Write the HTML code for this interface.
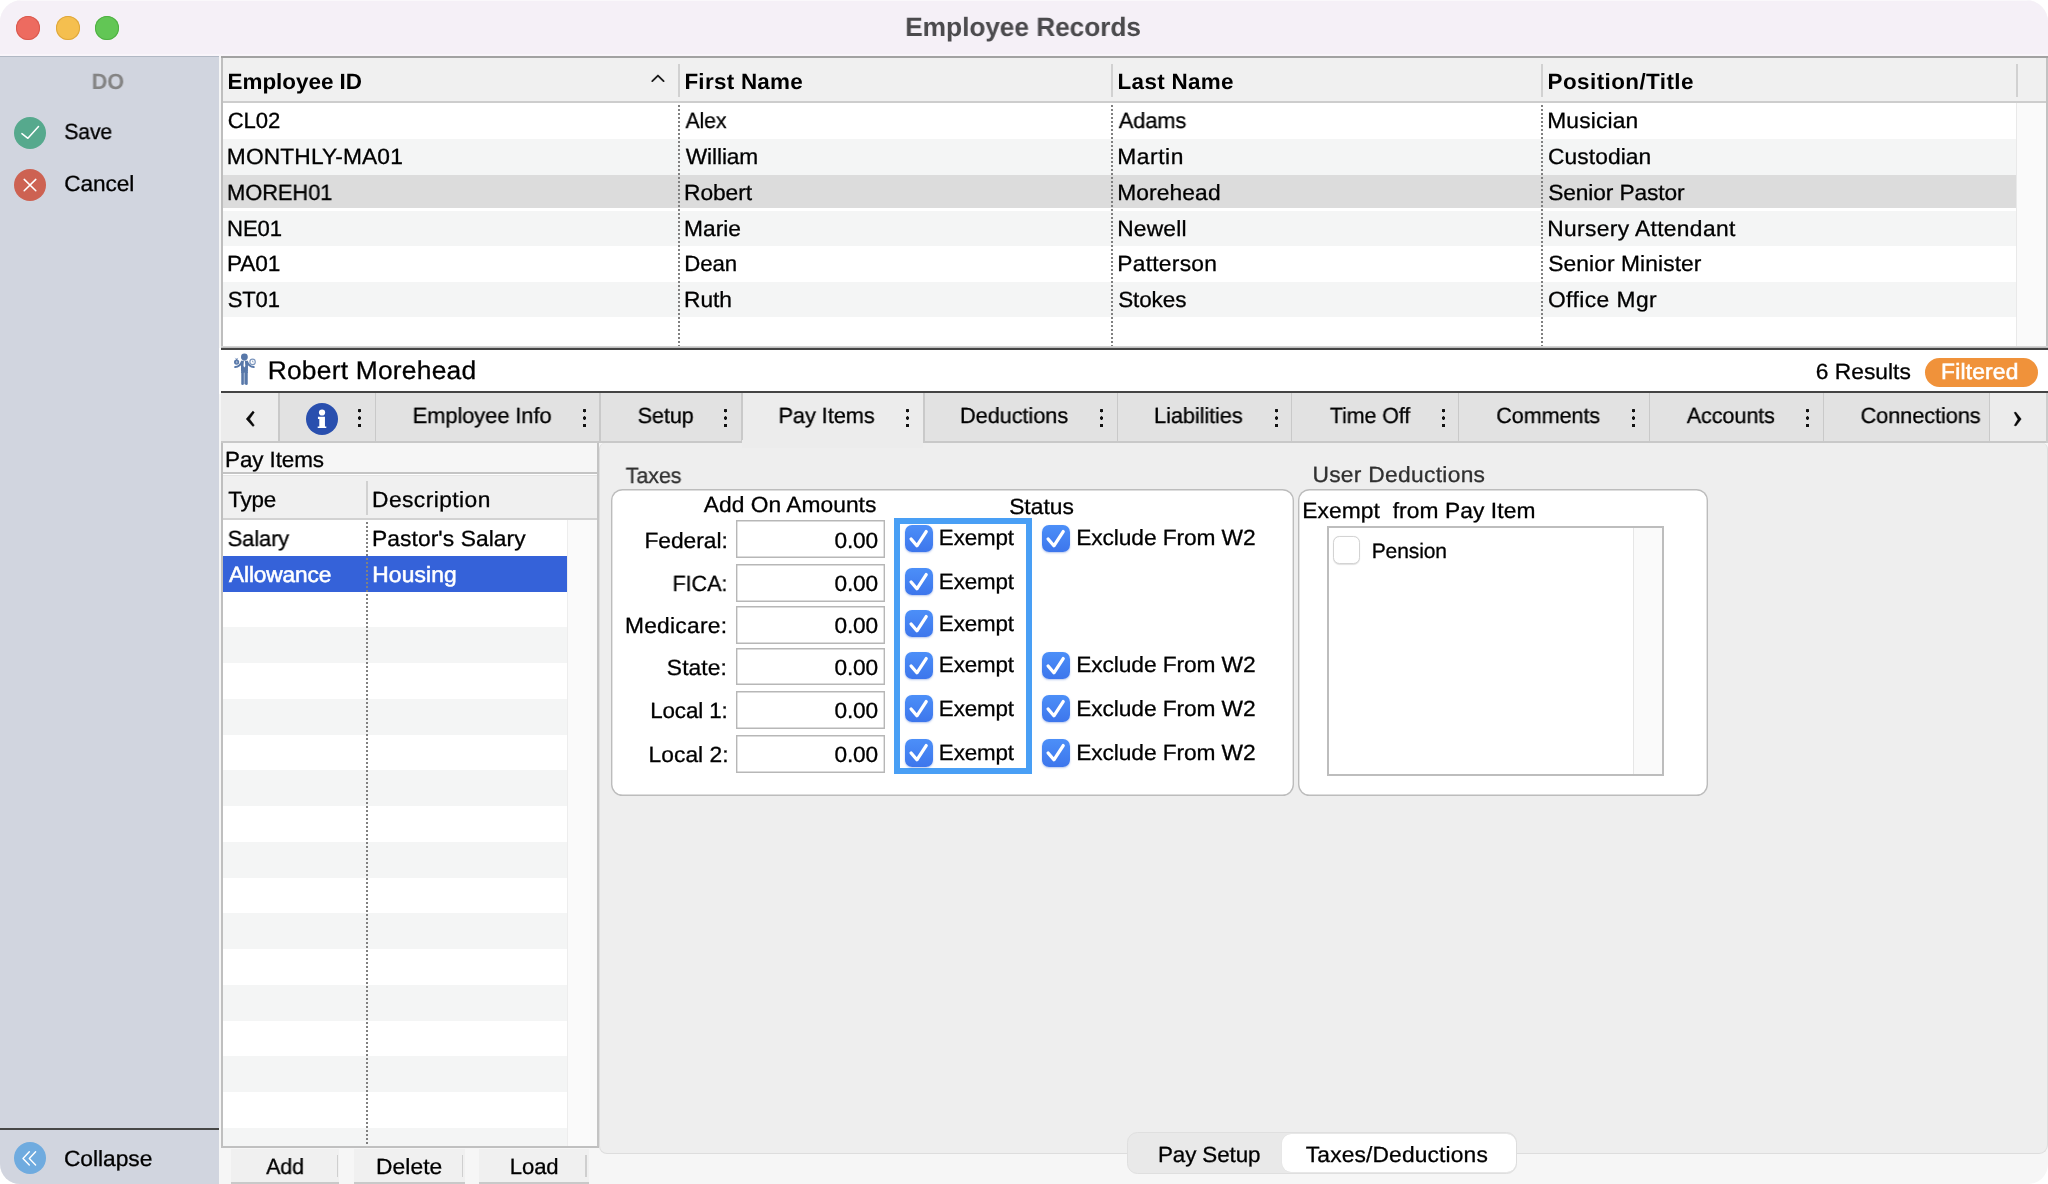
<!DOCTYPE html>
<html lang="en">
<head>
<meta charset="utf-8">
<title>Employee Records</title>
<style>
html,body{margin:0;padding:0;background:#fff;}
body{width:2048px;height:1184px;overflow:hidden;position:relative;font-family:"Liberation Sans",sans-serif;color:#000;}
#win{position:absolute;left:0;top:0;width:2048px;height:1184px;background:#f6f6f6;border-radius:22px 22px 20px 20px;overflow:hidden;}
#win div,#win svg{position:absolute;}
.t{white-space:nowrap;transform-origin:0 50%;will-change:transform;text-rendering:geometricPrecision;-webkit-text-stroke:0.3px;font-size:22px;line-height:30px;height:30px;}
.med{-webkit-text-stroke:0.55px;}
.b{-webkit-text-stroke:0;}
.alt{background:#f4f5f5;}
.w{background:#fff;}
.hsep{width:2px;background:#d1d1d1;}
.tsep{width:1.6px;top:393.2px;height:48px;background:#c9c9c9;}
.dotv{width:2px;background-image:linear-gradient(to bottom,#808080 50%,rgba(255,255,255,0) 50%);background-size:2px 4px;}
.dots{width:5px;height:20.4px;top:408.4px;background:radial-gradient(circle at 50% 2.7px,#111 1.5px,rgba(0,0,0,0) 1.95px),radial-gradient(circle at 50% 10.05px,#111 1.5px,rgba(0,0,0,0) 1.95px),radial-gradient(circle at 50% 17.5px,#111 1.5px,rgba(0,0,0,0) 1.95px);}
.fld{left:735.9px;width:148.9px;height:37.9px;background:#fff;box-shadow:inset 0 0 0 1.4px #b7b7b7;}
.cb{width:27.6px;height:27.4px;border-radius:7px;background:linear-gradient(to bottom,#4c8ff8,#3d76ec);box-shadow:0 1px 2px rgba(40,90,200,0.35);}
.cb svg{left:0;top:0;}
.grp{background:#fff;box-shadow:inset 0 0 0 1.4px #bcbcbc;border-radius:11.5px;}
.btn{top:1149px;height:33px;background:#f0f0f0;border-bottom:2px solid #c9c9c9;}
.bsep{top:1154.7px;height:22.5px;width:1.5px;background:#cfcfcf;}
</style>
</head>
<body>
<div id="win">

<!-- ===== TITLE BAR ===== -->
<div id="titlebar" style="left:0;top:0;width:2048px;height:56px;background:#f5f0f7;"></div>
<div style="left:16px;top:16px;width:24px;height:24px;border-radius:50%;background:#ed6b60;box-shadow:inset 0 0 0 1px #d95a4f;"></div>
<div style="left:56px;top:16px;width:24px;height:24px;border-radius:50%;background:#f5bf4f;box-shadow:inset 0 0 0 1px #dea73c;"></div>
<div style="left:95.3px;top:16px;width:24px;height:24px;border-radius:50%;background:#62c655;box-shadow:inset 0 0 0 1px #4fb043;"></div>

<!-- ===== SIDEBAR ===== -->
<div style="left:0;top:54.4px;width:2048px;height:1.2px;background:#f9f5fa;"></div>
<div style="left:0;top:0;width:2048px;height:1px;background:#faf8fb;"></div>
<div id="side" style="left:0;top:56px;width:219px;height:1128px;background:#d1d5df;"></div>
<div style="left:0;top:55.5px;width:219px;height:1px;background:#b1b8c4;"></div>
<svg style="left:14px;top:117px;" width="32" height="32" viewBox="0 0 32 32"><circle cx="16" cy="16" r="16" fill="#56a98d"/><path d="M7.9 16.6 L13.9 21.3 L24.5 9.6" fill="none" stroke="#fff" stroke-width="1.5" stroke-linecap="round" stroke-linejoin="round"/></svg>
<svg style="left:14px;top:168.8px;" width="32" height="32" viewBox="0 0 32 32"><circle cx="16" cy="16" r="16" fill="#cd6252"/><path d="M10.2 10.4 L21.8 21.7 M21.8 10.4 L10.2 21.7" fill="none" stroke="#fff" stroke-width="1.5" stroke-linecap="round"/></svg>
<div style="left:0;top:1128px;width:219px;height:2.2px;background:#474747;"></div>
<svg style="left:14px;top:1142px;" width="32" height="32" viewBox="0 0 32 32"><circle cx="16" cy="16" r="16" fill="#6fabdf"/><path d="M15.3 9.7 L9.0 16.4 L15.3 23.1 M21.6 9.7 L15.3 16.4 L21.6 23.1" fill="none" stroke="#fff" stroke-width="1.4" stroke-linecap="round" stroke-linejoin="round"/></svg>

<!-- ===== TABLE ===== -->
<div id="tbl" style="left:221px;top:56px;width:1827px;height:292px;background:#fff;"></div>
<div style="left:223px;top:58px;width:1823px;height:43px;background:#f0f0f0;"></div>
<div style="left:223px;top:101px;width:1823px;height:2px;background:#cdcdcd;"></div>
<div class="alt" style="left:223px;top:139px;width:1793px;height:36px;"></div>
<div style="left:223px;top:175px;width:1793px;height:33.3px;background:#dcdcdc;"></div>
<div class="alt" style="left:223px;top:211px;width:1793px;height:34.5px;"></div>
<div class="alt" style="left:223px;top:282.2px;width:1793px;height:35.3px;"></div>
<div style="left:2016px;top:103px;width:30px;height:245px;background:#fafafa;border-left:1.5px solid #e9e9e9;box-sizing:border-box;"></div>
<div class="hsep" style="left:678.2px;top:63.5px;height:33.5px;"></div>
<div class="hsep" style="left:1111.3px;top:63.5px;height:33.5px;"></div>
<div class="hsep" style="left:1541.2px;top:63.5px;height:33.5px;"></div>
<div class="hsep" style="left:2016.3px;top:63.5px;height:33.5px;"></div>
<div class="dotv" style="left:678px;top:105px;height:241px;"></div>
<div class="dotv" style="left:1111.2px;top:105px;height:241px;"></div>
<div class="dotv" style="left:1541.3px;top:105px;height:241px;"></div>
<svg style="left:649px;top:73px;" width="18" height="12" viewBox="0 0 18 12"><path d="M3.3 8.1 L8.95 2.6 L14.6 8.1" fill="none" stroke="#1a1a1a" stroke-width="1.9" stroke-linecap="round" stroke-linejoin="round"/></svg>
<div style="left:221px;top:56px;width:2px;height:292px;background:#bebebe;"></div>
<div style="left:2046px;top:56px;width:2px;height:292px;background:#c2c2c2;"></div>
<div style="left:221px;top:55.5px;width:1827px;height:2.2px;background:#a2a2a2;"></div>

<!-- ===== NAME BAR ===== -->
<div style="left:221px;top:345.8px;width:1827px;height:2px;background:linear-gradient(to bottom,#dedede,#b4b4b4);"></div>
<div style="left:219px;top:347.5px;width:1829px;height:46px;background:#fff;"></div>
<div style="left:221px;top:347.6px;width:1827px;height:2.2px;background:#444444;"></div>
<div style="left:221px;top:391.1px;width:1827px;height:2.1px;background:#444444;"></div>
<svg id="person" style="left:226px;top:348px;" width="40" height="44" viewBox="0 0 40 44">
 <g fill="#5878a9">
  <circle cx="18.4" cy="8.9" r="3.4"/>
  <path d="M15 15 Q15 12.5 17.4 12.5 H19.5 Q21.95 12.5 21.95 15 V22.5 L21.75 25 H15.2 L15 22.5 Z"/>
  <path d="M15.25 24 H17.9 V35.8 Q17.9 37.1 16.57 37.1 Q15.25 37.1 15.25 35.8 Z"/>
  <path d="M18.95 24 H21.75 V35.8 Q21.75 37.1 20.35 37.1 Q18.95 37.1 18.95 35.8 Z"/>
  <circle cx="10.6" cy="14.1" r="2.6"/>
  <rect x="9.9" y="10.7" width="1.5" height="1.2"/>
 </g>
 <rect x="17.9" y="24.6" width="1.05" height="11.6" fill="#93a9ca"/>
 <path d="M15.9 13.6 Q13.9 18.7 9.2 19.1" fill="none" stroke="#5878a9" stroke-width="2" stroke-linecap="round"/>
 <path d="M21 13.6 Q23 18.7 27.7 19.1" fill="none" stroke="#5878a9" stroke-width="2" stroke-linecap="round"/>
 <path d="M9.2 9.9 L10.1 10.9 M12.1 9.9 L11.2 10.9" fill="none" stroke="#7d97be" stroke-width="0.7"/>
 <ellipse cx="10.7" cy="14.2" rx="0.8" ry="1.4" fill="#9db1cf"/>
 <circle cx="26.6" cy="13.9" r="2.7" fill="#fff" stroke="#7d97be" stroke-width="1.2"/>
 <path d="M26.6 12.6 V14 H27.6" fill="none" stroke="#7d97be" stroke-width="0.8"/>
 <path d="M17.9 13 H18.9 L19.3 17.9 L18.4 19.6 L17.5 17.9 Z" fill="#fff"/>
</svg>
<div style="left:1924.7px;top:357.5px;width:113.3px;height:29.7px;border-radius:15px;background:#f0923a;"></div>

<!-- ===== TAB BAR ===== -->
<div id="tabs" style="left:221px;top:393.2px;width:1827px;height:48.1px;background:#e2e2e2;"></div>
<div style="left:221px;top:441.2px;width:1827px;height:2px;background:#c8c8c8;"></div>
<div style="left:221px;top:393.2px;width:57.5px;height:48.1px;background:#ececec;"></div>
<div style="left:742.4px;top:393.2px;width:181px;height:50px;background:#ececec;"></div>
<div style="left:1989.5px;top:393.2px;width:57px;height:48.1px;background:#ececec;"></div>
<div style="left:2046px;top:393.2px;width:2px;height:50px;background:#cdcdcd;"></div>
<div class="tsep" style="left:278.2px;"></div>
<div class="tsep" style="left:374.7px;"></div>
<div class="tsep" style="left:599.1px;"></div>
<div class="tsep" style="left:741px;"></div>
<div class="tsep" style="left:923.4px;"></div>
<div class="tsep" style="left:1116.9px;"></div>
<div class="tsep" style="left:1290.6px;"></div>
<div class="tsep" style="left:1457.6px;"></div>
<div class="tsep" style="left:1648.6px;"></div>
<div class="tsep" style="left:1822.9px;"></div>
<div class="tsep" style="left:1988.5px;"></div>
<div class="dots" style="left:357.4px;"></div>
<div class="dots" style="left:582.0px;"></div>
<div class="dots" style="left:723.4px;"></div>
<div class="dots" style="left:905.3px;"></div>
<div class="dots" style="left:1099.4px;"></div>
<div class="dots" style="left:1274.0px;"></div>
<div class="dots" style="left:1440.8px;"></div>
<div class="dots" style="left:1630.8px;"></div>
<div class="dots" style="left:1805.0px;"></div>
<svg style="left:243px;top:409px;" width="16" height="20" viewBox="0 0 16 20"><path d="M9.9 2.1 L3.2 10 L9.9 17.4 L11.3 16.3 L6.6 10 L11.3 3.4 Z" fill="#0a0a0a" stroke="#0a0a0a" stroke-width="0.5" stroke-linejoin="round"/></svg>
<svg style="left:2010px;top:409px;" width="16" height="20" viewBox="0 0 16 20"><path d="M4.0 3.5 L5.8 3.0 L11.3 10.1 L6.0 17.1 L4.1 16.5 L7.9 10.2 Z" fill="#0a0a0a" stroke="#0a0a0a" stroke-width="0.3" stroke-linejoin="round"/></svg>
<svg id="info" style="left:306px;top:403px;" width="32" height="32" viewBox="0 0 32 32"><circle cx="16" cy="16" r="16" fill="#294fae"/><circle cx="16.05" cy="9.5" r="3.1" fill="#fff"/><path d="M11.95 13.85 H18.95 V23.4 H20.3 V25.1 H11.7 V23.4 H13.3 V15.95 H11.95 Z" fill="#fff"/></svg>

<!-- ===== PAY ITEMS LIST ===== -->
<div style="left:221px;top:443.2px;width:377.6px;height:705px;background:#fff;"></div>
<div style="left:222.5px;top:443.2px;width:374.5px;height:29px;background:#f6f6f6;"></div>
<div style="left:222.5px;top:472.2px;width:374.5px;height:2.3px;background:#c4c4c4;"></div>
<div style="left:222.5px;top:474.5px;width:374.5px;height:1.5px;background:#e4e4e4;"></div>
<div style="left:222.5px;top:476px;width:374.5px;height:42px;background:#f0f0f0;"></div>
<div style="left:222.5px;top:518px;width:374.5px;height:2px;background:#d2d2d2;"></div>
<div class="hsep" style="left:365.8px;top:481.4px;height:33.2px;width:1.8px;"></div>
<div style="left:222.5px;top:555.75px;width:344.5px;height:35.75px;background:#3562d9;"></div>
<div class="alt" style="left:222.5px;top:627.25px;width:344.5px;height:35.75px;"></div>
<div class="alt" style="left:222.5px;top:698.75px;width:344.5px;height:35.75px;"></div>
<div class="alt" style="left:222.5px;top:770.25px;width:344.5px;height:35.75px;"></div>
<div class="alt" style="left:222.5px;top:841.75px;width:344.5px;height:35.75px;"></div>
<div class="alt" style="left:222.5px;top:913.25px;width:344.5px;height:35.75px;"></div>
<div class="alt" style="left:222.5px;top:984.75px;width:344.5px;height:35.75px;"></div>
<div class="alt" style="left:222.5px;top:1056.25px;width:344.5px;height:35.75px;"></div>
<div class="alt" style="left:222.5px;top:1127.75px;width:344.5px;height:18.25px;"></div>
<div style="left:567px;top:520px;width:30px;height:626px;background:#fafafa;border-left:1px solid #ededed;box-sizing:border-box;"></div>
<div class="dotv" style="left:366px;top:522px;height:624px;"></div>
<div style="left:220.5px;top:443.2px;width:2px;height:705px;background:#bfbfbf;"></div>
<div style="left:597px;top:443.2px;width:1.8px;height:705px;background:#c4c4c4;"></div>
<div style="left:220.5px;top:1146px;width:378.3px;height:2.2px;background:#c0c0c0;"></div>
<div class="btn" style="left:230.7px;width:108.8px;"></div>
<div class="btn" style="left:354px;width:110.5px;"></div>
<div class="btn" style="left:479.4px;width:109.3px;"></div>
<div class="bsep" style="left:336.6px;"></div>
<div class="bsep" style="left:461.6px;"></div>
<div class="bsep" style="left:585.4px;"></div>

<!-- ===== RIGHT PANEL ===== -->
<div id="panel" style="left:599px;top:443.2px;width:1449.4px;height:711px;background:#eeeeee;border:1px solid #dddddd;border-top:none;box-sizing:border-box;border-radius:6px 6px 9px 8px;"></div>
<div style="left:742.4px;top:440px;width:181px;height:8px;background:#ececec;"></div>
<div class="grp" style="left:610.5px;top:489.4px;width:683.3px;height:306.9px;"></div>
<div class="grp" style="left:1298px;top:489.2px;width:410px;height:307px;"></div>
<div class="fld" style="top:520.1px;"></div>
<div class="fld" style="top:563.9px;"></div>
<div class="fld" style="top:605.9px;"></div>
<div class="fld" style="top:647.5px;"></div>
<div class="fld" style="top:691.3px;"></div>
<div class="fld" style="top:735.1px;"></div>
<div style="left:894.1px;top:518.1px;width:137.8px;height:255.7px;background:#499ff5;"></div>
<div style="left:899.9px;top:523.7px;width:126.1px;height:244.4px;background:#fff;"></div>
<div class="cb" style="left:905px;top:524.5px;"><svg width="27.5" height="27.5" viewBox="0 0 27.5 27.5"><path d="M6.1 14 L11.9 20.8 L21.2 6.6" fill="none" stroke="#fff" stroke-width="3.3" stroke-linecap="round" stroke-linejoin="round"/></svg></div>
<div class="cb" style="left:1042.1px;top:524.5px;"><svg width="27.5" height="27.5" viewBox="0 0 27.5 27.5"><path d="M6.1 14 L11.9 20.8 L21.2 6.6" fill="none" stroke="#fff" stroke-width="3.3" stroke-linecap="round" stroke-linejoin="round"/></svg></div>
<div class="cb" style="left:905px;top:568px;"><svg width="27.5" height="27.5" viewBox="0 0 27.5 27.5"><path d="M6.1 14 L11.9 20.8 L21.2 6.6" fill="none" stroke="#fff" stroke-width="3.3" stroke-linecap="round" stroke-linejoin="round"/></svg></div>
<div class="cb" style="left:905px;top:610px;"><svg width="27.5" height="27.5" viewBox="0 0 27.5 27.5"><path d="M6.1 14 L11.9 20.8 L21.2 6.6" fill="none" stroke="#fff" stroke-width="3.3" stroke-linecap="round" stroke-linejoin="round"/></svg></div>
<div class="cb" style="left:905px;top:651.75px;"><svg width="27.5" height="27.5" viewBox="0 0 27.5 27.5"><path d="M6.1 14 L11.9 20.8 L21.2 6.6" fill="none" stroke="#fff" stroke-width="3.3" stroke-linecap="round" stroke-linejoin="round"/></svg></div>
<div class="cb" style="left:1042.1px;top:651.75px;"><svg width="27.5" height="27.5" viewBox="0 0 27.5 27.5"><path d="M6.1 14 L11.9 20.8 L21.2 6.6" fill="none" stroke="#fff" stroke-width="3.3" stroke-linecap="round" stroke-linejoin="round"/></svg></div>
<div class="cb" style="left:905px;top:695px;"><svg width="27.5" height="27.5" viewBox="0 0 27.5 27.5"><path d="M6.1 14 L11.9 20.8 L21.2 6.6" fill="none" stroke="#fff" stroke-width="3.3" stroke-linecap="round" stroke-linejoin="round"/></svg></div>
<div class="cb" style="left:1042.1px;top:695px;"><svg width="27.5" height="27.5" viewBox="0 0 27.5 27.5"><path d="M6.1 14 L11.9 20.8 L21.2 6.6" fill="none" stroke="#fff" stroke-width="3.3" stroke-linecap="round" stroke-linejoin="round"/></svg></div>
<div class="cb" style="left:905px;top:739.25px;"><svg width="27.5" height="27.5" viewBox="0 0 27.5 27.5"><path d="M6.1 14 L11.9 20.8 L21.2 6.6" fill="none" stroke="#fff" stroke-width="3.3" stroke-linecap="round" stroke-linejoin="round"/></svg></div>
<div class="cb" style="left:1042.1px;top:739.25px;"><svg width="27.5" height="27.5" viewBox="0 0 27.5 27.5"><path d="M6.1 14 L11.9 20.8 L21.2 6.6" fill="none" stroke="#fff" stroke-width="3.3" stroke-linecap="round" stroke-linejoin="round"/></svg></div>
<div style="left:1326.5px;top:526.2px;width:337.5px;height:249.8px;box-sizing:border-box;background:#fff;border:2px solid #bdbdbd;"></div>
<div style="left:1633px;top:528.2px;width:29px;height:245.8px;background:#fafafa;border-left:1px solid #e6e6e6;box-sizing:border-box;"></div>
<div style="left:1332.5px;top:536.3px;width:27.3px;height:27.4px;box-sizing:border-box;border-radius:6.5px;background:#fff;border:1px solid #d3d3d3;box-shadow:0 0.5px 1px rgba(0,0,0,0.12);"></div>

<!-- ===== SEGMENTED CONTROL ===== -->
<div style="left:1127.2px;top:1132.2px;width:390.1px;height:42px;box-sizing:border-box;border-radius:10.5px;background:#e9e9e9;border:1px solid #dfdfdf;"></div>
<div style="left:1282.2px;top:1134.3px;width:234.1px;height:38.2px;border-radius:9px;background:#fff;box-shadow:0 0 1px rgba(0,0,0,0.10);"></div>

<!-- ===== TEXT ===== -->
<div class="t b" id="t0" style="left:905px;top:9px;font-size:26.5px;line-height:36px;height:36px;letter-spacing:-0.100px;transform:translate(0.18px,0.00px) scaleX(0.9948);font-weight:bold;color:#4b4a4d;">Employee Records</div>
<div class="t b" id="t1" style="left:91px;top:67px;letter-spacing:-0.100px;transform:translate(0.69px,0.00px) scaleX(0.9864);font-weight:bold;color:#848484;">DO</div>
<div class="t" id="t2" style="left:64px;top:117px;letter-spacing:-0.100px;transform:translate(0.30px,0.00px) scaleX(0.9615);">Save</div>
<div class="t" id="t3" style="left:64px;top:169px;letter-spacing:-0.100px;transform:translate(0.36px,0.00px) scaleX(1.0282);">Cancel</div>
<div class="t" id="t4" style="left:63px;top:1144px;letter-spacing:-0.031px;transform:translate(0.92px,0.00px) scaleX(1.035);">Collapse</div>
<div class="t b" id="t5" style="left:227px;top:67px;letter-spacing:-0.025px;transform:translate(0.56px,0.00px) scaleX(1.02);font-weight:bold;">Employee ID</div>
<div class="t b" id="t6" style="left:684px;top:67px;letter-spacing:0.267px;transform:translate(0.39px,0.00px) scaleX(1.02);font-weight:bold;">First Name</div>
<div class="t b" id="t7" style="left:1117px;top:67px;letter-spacing:0.301px;transform:translate(0.60px,0.00px) scaleX(1.02);font-weight:bold;">Last Name</div>
<div class="t b" id="t8" style="left:1547px;top:67px;letter-spacing:0.402px;transform:translate(0.60px,0.00px) scaleX(1.02);font-weight:bold;">Position/Title</div>
<div class="t" id="t9" style="left:227px;top:106px;letter-spacing:-0.100px;transform:translate(0.63px,0.00px) scaleX(1.0052);">CL02</div>
<div class="t" id="t10" style="left:685px;top:106px;letter-spacing:-0.100px;transform:translate(0.51px,0.00px) scaleX(0.9658);">Alex</div>
<div class="t" id="t11" style="left:1118px;top:106px;letter-spacing:-0.100px;transform:translate(0.75px,0.00px) scaleX(0.9933);">Adams</div>
<div class="t" id="t12" style="left:1547px;top:106px;letter-spacing:0.167px;transform:translate(0.23px,0.00px) scaleX(1.035);">Musician</div>
<div class="t" id="t13" style="left:226px;top:142px;letter-spacing:0.118px;transform:translate(0.85px,0.00px) scaleX(1.035);">MONTHLY-MA01</div>
<div class="t" id="t14" style="left:685px;top:142px;letter-spacing:-0.100px;transform:translate(0.78px,0.00px) scaleX(1.0313);">William</div>
<div class="t" id="t15" style="left:1117px;top:142px;letter-spacing:0.553px;transform:translate(0.22px,0.00px) scaleX(1.035);">Martin</div>
<div class="t" id="t16" style="left:1547px;top:142px;letter-spacing:0.092px;transform:translate(0.99px,0.00px) scaleX(1.035);">Custodian</div>
<div class="t" id="t17" style="left:227px;top:178px;letter-spacing:-0.100px;transform:translate(0.03px,0.00px) scaleX(0.996);">MOREH01</div>
<div class="t" id="t18" style="left:684px;top:178px;letter-spacing:-0.070px;transform:translate(0.07px,0.00px) scaleX(1.035);">Robert</div>
<div class="t" id="t19" style="left:1117px;top:178px;letter-spacing:0.109px;transform:translate(0.23px,0.00px) scaleX(1.035);">Morehead</div>
<div class="t" id="t20" style="left:1548px;top:178px;letter-spacing:-0.100px;transform:translate(0.18px,0.00px) scaleX(1.0319);">Senior Pastor</div>
<div class="t" id="t21" style="left:227px;top:214px;letter-spacing:-0.100px;transform:translate(0.02px,0.00px) scaleX(1.0066);">NE01</div>
<div class="t" id="t22" style="left:684px;top:214px;transform:translate(0.07px,0.00px) scaleX(1.035);">Marie</div>
<div class="t" id="t23" style="left:1117px;top:214px;letter-spacing:0.175px;transform:translate(0.22px,0.00px) scaleX(1.035);">Newell</div>
<div class="t" id="t24" style="left:1547px;top:214px;letter-spacing:0.350px;transform:translate(0.22px,0.00px) scaleX(1.035);">Nursery Attendant</div>
<div class="t" id="t25" style="left:227px;top:249px;letter-spacing:-0.100px;transform:translate(0.02px,0.00px) scaleX(1.0298);">PA01</div>
<div class="t" id="t26" style="left:684px;top:249px;letter-spacing:-0.100px;transform:translate(0.20px,0.00px) scaleX(1.0093);">Dean</div>
<div class="t" id="t27" style="left:1117px;top:249px;letter-spacing:0.267px;transform:translate(0.23px,0.00px) scaleX(1.035);">Patterson</div>
<div class="t" id="t28" style="left:1548px;top:249px;letter-spacing:0.094px;transform:translate(0.18px,0.00px) scaleX(1.035);">Senior Minister</div>
<div class="t" id="t29" style="left:227px;top:285px;letter-spacing:-0.100px;transform:translate(0.66px,0.00px) scaleX(1.0012);">ST01</div>
<div class="t" id="t30" style="left:684px;top:285px;letter-spacing:-0.100px;transform:translate(0.08px,0.00px) scaleX(1.0335);">Ruth</div>
<div class="t" id="t31" style="left:1118px;top:285px;letter-spacing:-0.100px;transform:translate(0.21px,0.00px) scaleX(1.0208);">Stokes</div>
<div class="t" id="t32" style="left:1547px;top:285px;letter-spacing:0.433px;transform:translate(0.96px,0.00px) scaleX(1.035);">Office Mgr</div>
<div class="t" id="t33" style="left:267px;top:353px;font-size:25.5px;line-height:36px;height:36px;letter-spacing:0.209px;transform:translate(0.69px,0.00px) scaleX(1.035);">Robert Morehead</div>
<div class="t" id="t34" style="left:1815px;top:357px;transform:translate(0.87px,0.00px) scaleX(1.035);">6 Results</div>
<div class="t med" id="t35" style="left:1941px;top:357px;letter-spacing:0.183px;transform:translate(0.08px,0.00px) scaleX(1.035);color:#fff;">Filtered</div>
<div class="t" id="t36" style="left:412px;top:401px;letter-spacing:-0.100px;transform:translate(0.68px,0.00px) scaleX(0.9961);">Employee Info</div>
<div class="t" id="t37" style="left:637px;top:401px;letter-spacing:-0.100px;transform:translate(0.68px,0.00px) scaleX(0.9819);">Setup</div>
<div class="t" id="t38" style="left:778px;top:401px;letter-spacing:-0.100px;transform:translate(0.50px,0.00px) scaleX(0.9916);">Pay Items</div>
<div class="t" id="t39" style="left:959px;top:401px;letter-spacing:-0.100px;transform:translate(0.99px,0.00px) scaleX(0.9908);">Deductions</div>
<div class="t" id="t40" style="left:1154px;top:401px;letter-spacing:-0.100px;transform:translate(0.00px,0.00px) scaleX(0.9919);">Liabilities</div>
<div class="t" id="t41" style="left:1329px;top:401px;letter-spacing:-0.100px;transform:translate(0.88px,0.00px) scaleX(0.9745);">Time Off</div>
<div class="t" id="t42" style="left:1496px;top:401px;letter-spacing:-0.100px;transform:translate(0.25px,0.00px) scaleX(0.9819);">Comments</div>
<div class="t" id="t43" style="left:1686px;top:401px;letter-spacing:-0.100px;transform:translate(0.78px,0.00px) scaleX(0.9814);">Accounts</div>
<div class="t" id="t44" style="left:1860px;top:401px;letter-spacing:-0.100px;transform:translate(0.53px,0.00px) scaleX(0.9901);">Connections</div>
<div class="t" id="t45" style="left:225px;top:445px;letter-spacing:-0.100px;transform:translate(0.09px,0.00px) scaleX(1.0186);">Pay Items</div>
<div class="t" id="t46" style="left:228px;top:485px;letter-spacing:-0.100px;transform:translate(0.14px,0.00px) scaleX(1.0162);">Type</div>
<div class="t" id="t47" style="left:372px;top:485px;letter-spacing:0.433px;transform:translate(0.00px,0.00px) scaleX(1.035);">Description</div>
<div class="t" id="t48" style="left:227px;top:524px;letter-spacing:-0.100px;transform:translate(0.64px,0.00px) scaleX(0.9954);">Salary</div>
<div class="t" id="t49" style="left:372px;top:524px;letter-spacing:0.084px;transform:translate(0.00px,0.00px) scaleX(1.035);">Pastor&#39;s Salary</div>
<div class="t med" id="t50" style="left:228px;top:560px;letter-spacing:-0.100px;transform:translate(0.96px,0.00px) scaleX(1.0294);color:#fff;">Allowance</div>
<div class="t med" id="t51" style="left:372px;top:560px;letter-spacing:0.166px;transform:translate(0.19px,0.00px) scaleX(1.035);color:#fff;">Housing</div>
<div class="t" id="t52" style="left:266px;top:1152px;letter-spacing:-0.100px;transform:translate(0.17px,0.00px) scaleX(0.9719);">Add</div>
<div class="t" id="t53" style="left:376px;top:1152px;letter-spacing:0.088px;transform:translate(0.00px,0.00px) scaleX(1.035);">Delete</div>
<div class="t" id="t54" style="left:509px;top:1152px;letter-spacing:-0.100px;transform:translate(0.78px,0.00px) scaleX(1.0049);">Load</div>
<div class="t" id="t55" style="left:625px;top:461px;letter-spacing:-0.100px;transform:translate(0.68px,0.00px) scaleX(0.9775);color:#303030;">Taxes</div>
<div class="t" id="t56" style="left:1312px;top:460px;letter-spacing:0.296px;transform:translate(0.38px,0.00px) scaleX(1.035);color:#303030;">User Deductions</div>
<div class="t" id="t57" style="left:703px;top:490px;letter-spacing:0.027px;transform:translate(0.83px,0.00px) scaleX(1.035);">Add On Amounts</div>
<div class="t" id="t58" style="left:1009px;top:492px;letter-spacing:0.006px;transform:translate(0.18px,0.00px) scaleX(1.035);">Status</div>
<div class="t" id="t59" style="left:644px;top:526px;letter-spacing:-0.020px;transform:translate(0.44px,0.00px) scaleX(1.035);">Federal:</div>
<div class="t" id="t60" style="left:834px;top:526px;letter-spacing:-0.100px;transform:translate(0.38px,0.00px) scaleX(1.0306);">0.00</div>
<div class="t" id="t61" style="left:672px;top:569px;letter-spacing:-0.100px;transform:translate(0.55px,0.00px) scaleX(0.9825);">FICA:</div>
<div class="t" id="t62" style="left:834px;top:569px;letter-spacing:-0.100px;transform:translate(0.38px,0.00px) scaleX(1.0306);">0.00</div>
<div class="t" id="t63" style="left:624px;top:611px;letter-spacing:0.254px;transform:translate(0.94px,0.00px) scaleX(1.035);">Medicare:</div>
<div class="t" id="t64" style="left:834px;top:611px;letter-spacing:-0.100px;transform:translate(0.38px,0.00px) scaleX(1.0306);">0.00</div>
<div class="t" id="t65" style="left:666px;top:653px;letter-spacing:0.089px;transform:translate(0.86px,0.00px) scaleX(1.035);">State:</div>
<div class="t" id="t66" style="left:834px;top:653px;letter-spacing:-0.100px;transform:translate(0.38px,0.00px) scaleX(1.0306);">0.00</div>
<div class="t" id="t67" style="left:650px;top:696px;letter-spacing:-0.100px;transform:translate(0.18px,0.00px) scaleX(1.0163);">Local 1:</div>
<div class="t" id="t68" style="left:834px;top:696px;letter-spacing:-0.100px;transform:translate(0.38px,0.00px) scaleX(1.0306);">0.00</div>
<div class="t" id="t69" style="left:648px;top:740px;letter-spacing:0.058px;transform:translate(0.49px,0.00px) scaleX(1.035);">Local 2:</div>
<div class="t" id="t70" style="left:834px;top:740px;letter-spacing:-0.100px;transform:translate(0.38px,0.00px) scaleX(1.0306);">0.00</div>
<div class="t" id="t71" style="left:938px;top:523px;letter-spacing:-0.100px;transform:translate(0.85px,0.00px) scaleX(1.0154);">Exempt</div>
<div class="t" id="t72" style="left:938px;top:567px;letter-spacing:-0.100px;transform:translate(0.85px,0.00px) scaleX(1.0154);">Exempt</div>
<div class="t" id="t73" style="left:938px;top:609px;letter-spacing:-0.100px;transform:translate(0.85px,0.00px) scaleX(1.0154);">Exempt</div>
<div class="t" id="t74" style="left:938px;top:650px;letter-spacing:-0.100px;transform:translate(0.85px,0.00px) scaleX(1.0154);">Exempt</div>
<div class="t" id="t75" style="left:938px;top:694px;letter-spacing:-0.100px;transform:translate(0.85px,0.00px) scaleX(1.0154);">Exempt</div>
<div class="t" id="t76" style="left:938px;top:738px;letter-spacing:-0.100px;transform:translate(0.85px,0.00px) scaleX(1.0154);">Exempt</div>
<div class="t" id="t77" style="left:1076px;top:523px;letter-spacing:-0.100px;transform:translate(0.23px,0.00px) scaleX(1.0344);">Exclude From W2</div>
<div class="t" id="t78" style="left:1076px;top:650px;letter-spacing:-0.100px;transform:translate(0.23px,0.00px) scaleX(1.0344);">Exclude From W2</div>
<div class="t" id="t79" style="left:1076px;top:694px;letter-spacing:-0.100px;transform:translate(0.23px,0.00px) scaleX(1.0344);">Exclude From W2</div>
<div class="t" id="t80" style="left:1076px;top:738px;letter-spacing:-0.100px;transform:translate(0.23px,0.00px) scaleX(1.0344);">Exclude From W2</div>
<div class="t" id="t81" style="left:1302px;top:496px;letter-spacing:0.076px;transform:translate(0.23px,0.00px) scaleX(1.035);">Exempt  from Pay Item</div>
<div class="t" id="t82" style="left:1371px;top:537px;font-size:21px;letter-spacing:-0.100px;transform:translate(0.70px,0.00px) scaleX(1.0002);">Pension</div>
<div class="t" id="t83" style="left:1157px;top:1140px;letter-spacing:-0.100px;transform:translate(0.98px,0.00px) scaleX(1.0171);">Pay Setup</div>
<div class="t" id="t84" style="left:1305px;top:1140px;letter-spacing:0.143px;transform:translate(0.82px,0.00px) scaleX(1.035);">Taxes/Deductions</div>

</div>
</body>
</html>
